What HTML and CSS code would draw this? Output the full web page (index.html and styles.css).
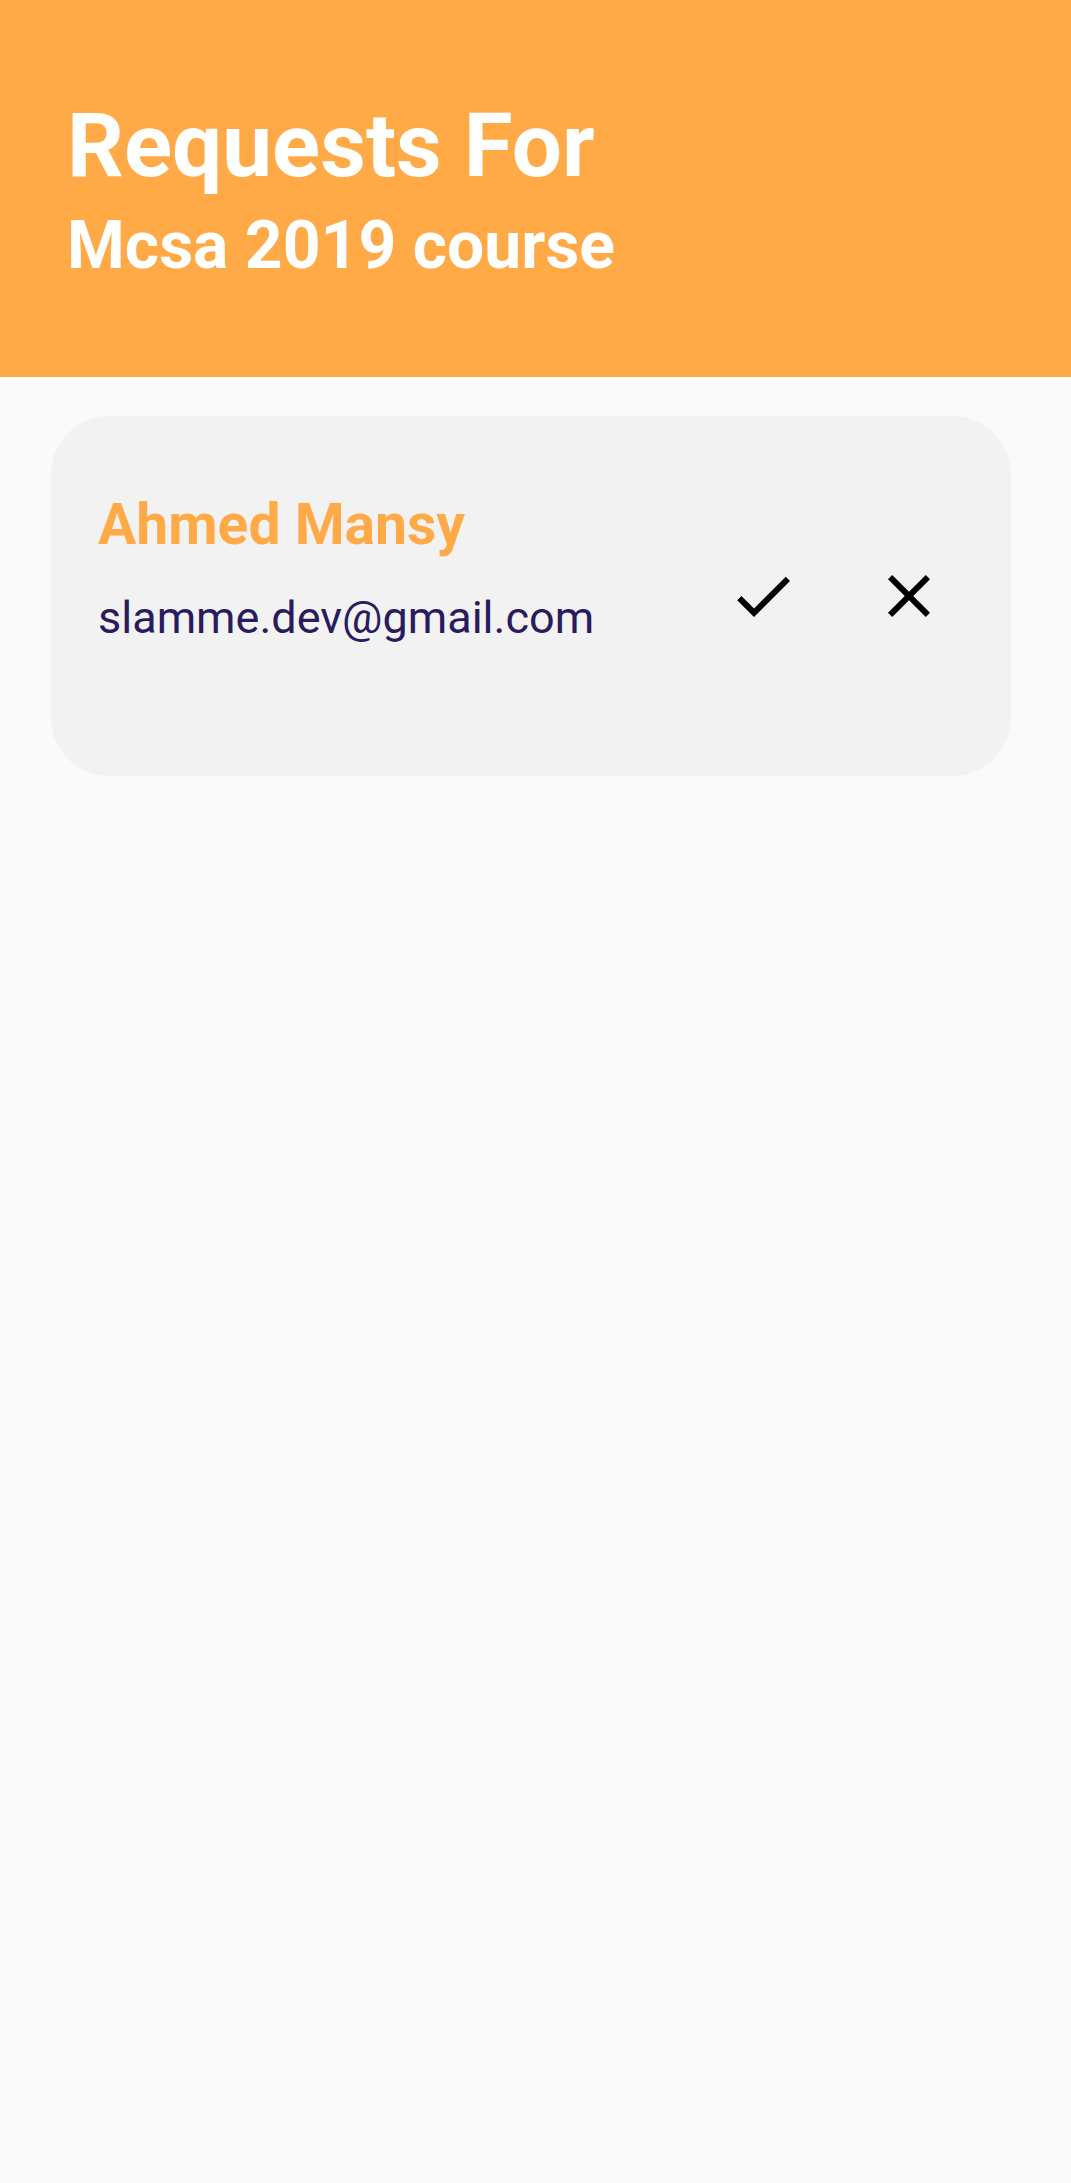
FILE: index.html
```html
<!DOCTYPE html>
<html lang="en">
<head>
<meta charset="utf-8">
<title>Requests</title>
<link rel="stylesheet" href="styles.css">
</head>
<body>
<header class="header">
  <h1 class="title">Requests For</h1>
  <h2 class="subtitle">Mcsa 2019 course</h2>
</header>
<main class="list">
  <div class="card">
    <div class="info">
      <div class="name">Ahmed Mansy</div>
      <div class="email">slamme.dev@gmail.com</div>
    </div>
    <div class="actions">
      <button class="icon-btn" aria-label="Accept">
        <svg viewBox="0 0 24 24" width="72" height="72"><path d="M9 16.17L4.83 12l-1.42 1.41L9 19 21 7l-1.41-1.41z" fill="#000"/></svg>
      </button>
      <button class="icon-btn" aria-label="Reject">
        <svg viewBox="0 0 24 24" width="72" height="72"><path d="M19 6.41L17.59 5 12 10.59 6.41 5 5 6.41 10.59 12 5 17.59 6.41 19 12 13.41 17.59 19 19 17.59 13.41 12z" fill="#000"/></svg>
      </button>
    </div>
  </div>
</main>
</body>
</html>
```

FILE: styles.css
```css
* { box-sizing: border-box; }
html, body {
  margin: 0;
  padding: 0;
  background: #fafafa;
  font-family: Roboto, "Liberation Sans", sans-serif;
}
.header {
  height: 377px;
  background: #ffa947;
  padding: 101px 0 0 67px;
}
.title {
  margin: 0;
  font-size: 89px;
  line-height: 1;
  font-weight: 700;
  color: #ffffff;
}
.subtitle {
  margin: 23px 0 0 0;
  font-size: 66px;
  line-height: 1;
  font-weight: 700;
  color: #ffffff;
}
.list {
  padding: 39px 60px 0 51px;
}
.card {
  width: 960px;
  height: 360px;
  background: #f2f2f2;
  border-radius: 58px;
  display: flex;
  align-items: center;
  padding: 0 66px 0 47px;
}
.info {
  align-self: flex-start;
  margin-top: 80px;
  flex: 1;
}
.name {
  font-size: 57px;
  line-height: 1;
  font-weight: 700;
  color: #ffa947;
}
.email {
  margin-top: 42px;
  font-size: 45px;
  line-height: 1;
  color: #2a1b5e;
}
.actions {
  display: flex;
  gap: 74px;
}
.icon-btn {
  width: 72px;
  height: 72px;
  padding: 0;
  border: 0;
  background: none;
  display: block;
}
.icon-btn svg { display: block; }
```
